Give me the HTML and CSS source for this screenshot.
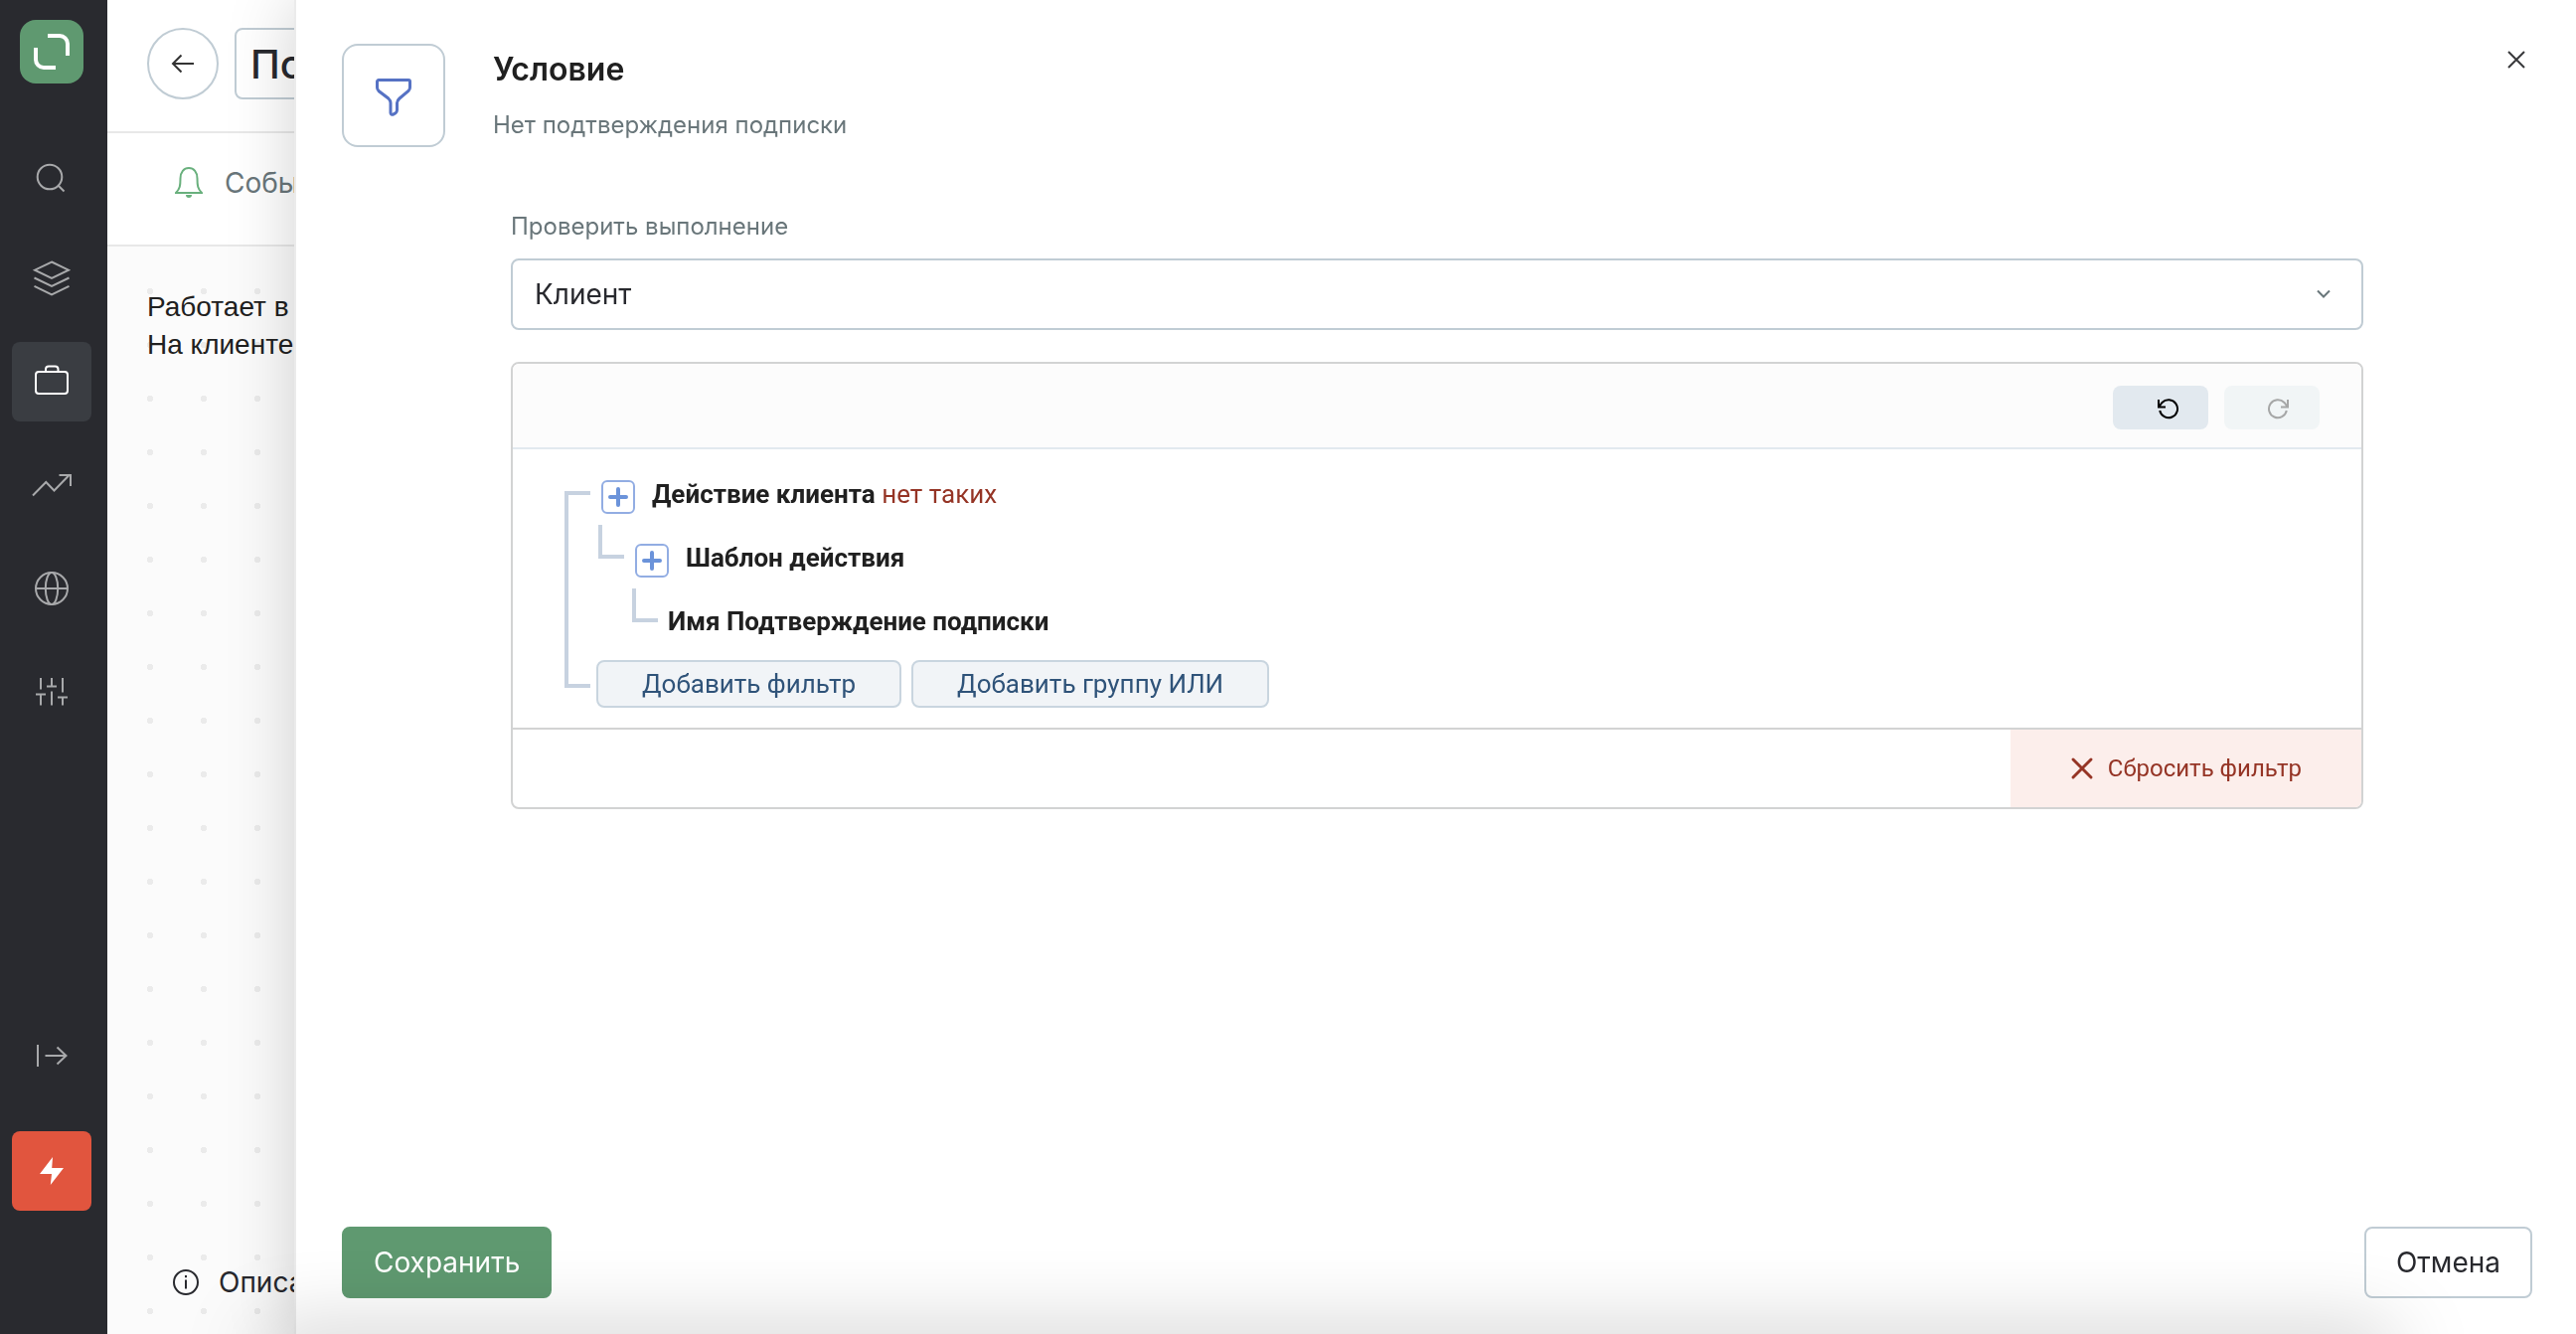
FILE: index.html
```html
<!DOCTYPE html>
<html lang="ru">
<head>
<meta charset="utf-8">
<meta name="viewport" content="width=device-width, initial-scale=1">
<title>Условие</title>
<link rel="stylesheet" href="styles.css">
</head>
<body>
<div class="app">
  <nav class="sidebar" aria-label="Главное меню">
    <a class="logo" href="#" aria-label="Главная">
      <svg width="64" height="64" viewBox="0 0 64 64" fill="none" stroke="#fff" stroke-width="4"><path d="M28 16h12a8 8 0 0 1 8 8v12M16 28v12a8 8 0 0 0 8 8h12"/></svg>
    </a>
    <a class="nav-item" href="#" aria-label="Поиск">
      <svg width="80" height="80" viewBox="0 0 80 80"><circle cx="38" cy="42" r="12.3"/><path d="M46.500 50.500l6 6"/></svg>
    </a>
    <a class="nav-item" href="#" aria-label="Слои">
      <svg width="80" height="80" viewBox="0 0 80 80"><path d="M40 23.500l17 8.200-17 8.300-17-8.300zM22.500 39.500l17.500 8.500 17.500-8.500M22.500 47.800l17.500 8.500 17.500-8.500"/></svg>
    </a>
    <a class="nav-item nav-item--active" href="#" aria-label="Кампании">
      <svg width="80" height="80" viewBox="0 0 80 80"><rect x="24" y="30" width="32" height="22" rx="3"/><path d="M34 30v-2.500a3 3 0 0 1 3-3h6.500a3 3 0 0 1 3 3V30"/></svg>
    </a>
    <a class="nav-item" href="#" aria-label="Отчёты">
      <svg width="80" height="80" viewBox="0 0 80 80"><path d="M21 50.500l13.300-13.500 8.200 8.500 15.500-16M47.500 30H59v11"/></svg>
    </a>
    <a class="nav-item" href="#" aria-label="Интеграции">
      <svg width="80" height="80" viewBox="0 0 80 80"><circle cx="40" cy="40" r="16"/><ellipse cx="40" cy="40" rx="6.200" ry="16"/><path d="M24 40h32"/></svg>
    </a>
    <a class="nav-item" href="#" aria-label="Настройки">
      <svg width="80" height="80" viewBox="0 0 80 80"><path d="M29 26v11.500M24 42.500h10M29 42.500V53.500M40 26v8M35 34.500h10M40 39.500v14M51 26v14.500M46 45.500h10M51 45.500v8"/></svg>
    </a>
    <div class="sidebar-bottom">
      <button class="nav-item" type="button" aria-label="Развернуть меню">
        <svg width="80" height="80" viewBox="0 0 80 80"><path d="M26 29v22M33.500 40H54M45.500 31.500L54.500 40l-9 8.500"/></svg>
      </button>
      <button class="nav-item nav-item--alert" type="button" aria-label="Быстрые действия">
        <svg width="80" height="80" viewBox="0 0 80 80"><path d="M41 26L28 43h12l-1.200 11L52 37H40.200z"/></svg>
      </button>
    </div>
  </nav>

  <main class="workspace">
    <header class="topbar">
      <button class="back" type="button" aria-label="Назад">
        <svg width="72" height="72" viewBox="0 0 72 72"><path d="M47 36H26M34.500 27.500L26 36l8.500 8.500"/></svg>
      </button>
      <input class="flow-name" type="text" value="По" aria-label="Название">
    </header>
    <div class="event-bar">
      <svg width="28" height="32" viewBox="0 0 28 32"><path d="M1 26c4-4 4.500-7 4.500-14.500C5.500 5 9 1 14 1s8.500 4 8.500 10.500C22.500 19 23 22 27 26z"/><path class="clapper" d="M11 28h6a3 3 0 0 1-6 0z"/></svg>
      <span>События</span>
    </div>
    <div class="canvas">
      <p class="note">Работает в<br>На клиенте</p>
      <div class="description">
        <svg width="26" height="26" viewBox="0 0 26 26"><circle cx="13" cy="13" r="12"/><path d="M13 10.500v9M13 6v2.200"/></svg>
        <span>Описание</span>
      </div>
    </div>
  </main>
</div>

<section class="drawer" role="dialog" aria-labelledby="drawer-title">
  <header class="drawer-header">
    <div class="drawer-icon">
      <svg width="36" height="38" viewBox="0 0 36 38"><path d="M3 1.500h30a1.500 1.500 0 0 1 1.500 1.500v6c0 1.500-.5 2.500-1.500 3.500l-9 7.500c-1.500 1.300-2.500 2.500-2.500 4.500v7c0 1.500-.5 2.500-1.500 3.200l-2 1.200c-1.500.9-3 .1-3-1.500V24.500c0-2-.8-3.200-2.200-4.500L3 12.500C2 11.500 1.500 10.500 1.500 9V3A1.500 1.500 0 0 1 3 1.500z"/></svg>
    </div>
    <div class="drawer-heading">
      <h1 id="drawer-title">Условие</h1>
      <p>Нет подтверждения подписки</p>
    </div>
    <button class="close" type="button" aria-label="Закрыть">
      <svg width="32" height="32" viewBox="0 0 32 32"><path d="M8 8l16 16M24 8L8 24"/></svg>
    </button>
  </header>

  <form class="drawer-body" id="condition-form">
    <label class="field-label" for="target">Проверить выполнение</label>
    <div class="select">
      <select id="target"><option>Клиент</option></select>
      <svg width="16" height="10" viewBox="0 0 16 10"><path d="M2 1.500l6 6 6-6"/></svg>
    </div>

    <div class="filter">
      <div class="filter-toolbar">
        <button class="history" type="button" aria-label="Отменить">
          <svg width="24" height="24" viewBox="0 0 24 24"><path d="M3 4v7.500h7M3.500 11L6.500 7A9 9 0 1 1 4.200 15"/></svg>
        </button>
        <button class="history history--off" type="button" aria-label="Повторить" disabled>
          <svg width="24" height="24" viewBox="0 0 24 24"><path d="M21 4v7.500h-7M20.500 11L17.500 7A9 9 0 1 0 19.800 15"/></svg>
        </button>
      </div>
      <div class="tree">
        <span class="bracket"></span>
        <div class="tree-rows">
          <div class="row row--root">
            <button class="plus" type="button" aria-label="Добавить условие"><svg width="20" height="20" viewBox="0 0 20 20"><path d="M10 2v16M2 10h16"/></svg></button>
            <span class="row-text"><b>Действие клиента</b> <span class="negative">нет таких</span></span>
          </div>
          <div class="row row--child">
            <span class="elbow"></span>
            <button class="plus" type="button" aria-label="Добавить условие"><svg width="20" height="20" viewBox="0 0 20 20"><path d="M10 2v16M2 10h16"/></svg></button>
            <b class="row-text">Шаблон действия</b>
          </div>
          <div class="row row--leaf">
            <span class="elbow"></span>
            <b class="row-text">Имя Подтверждение подписки</b>
          </div>
          <div class="tree-actions">
            <button class="add" type="button">Добавить фильтр</button>
            <button class="add" type="button">Добавить группу ИЛИ</button>
          </div>
        </div>
      </div>
      <div class="filter-footer">
        <button class="reset" type="button">
          <svg width="24" height="24" viewBox="0 0 24 24"><path d="M3 3l18 18M21 3L3 21"/></svg>
          Сбросить фильтр
        </button>
      </div>
    </div>
  </form>

  <footer class="drawer-footer">
    <button class="btn btn--primary" type="submit" form="condition-form">Сохранить</button>
    <button class="btn" type="button">Отмена</button>
  </footer>
</section>
<div class="bottom-shade"></div>
</body>
</html>
```
FILE: styles.css
```css
* { box-sizing: border-box; }

:root {
  --line: #c0ccd4;
  --muted: #69767a;
  --ink: #28292e;
  --text: #202020;
  --filter-font: Roboto, "Noto Sans", sans-serif;
}

body {
  margin: 0;
  background: #fff;
  color: var(--ink);
  font: 28px/40px Inter, sans-serif;
}

button, input, select { font: inherit; color: inherit; }
button { padding: 0; border: 0; background: none; cursor: pointer; }
svg { display: block; fill: none; flex: none; }
h1, p { margin: 0; }

.app { display: flex; min-height: 100vh; }

/* Sidebar */
.sidebar {
  display: flex;
  flex-direction: column;
  align-items: center;
  gap: 24px;
  width: 108px;
  flex: none;
  padding: 20px 4px 124px 0;
  background: #292a2f;
}
.logo { margin-bottom: 28px; border-radius: 16px; background: #5f9970; }
.nav-item { border-radius: 8px; stroke: #a8a9ab; stroke-width: 2; }
.nav-item--active { background: #3a3d42; stroke: #fff; }
.nav-item--alert { background: #e1553e; stroke: none; }
.nav-item--alert svg { fill: #fff; }
.sidebar-bottom { display: flex; flex-direction: column; gap: 36px; margin-top: auto; }

/* Page behind the drawer */
.workspace { display: flex; flex-direction: column; flex: 1; min-width: 0; }
.topbar {
  display: flex;
  gap: 16px;
  padding: 28px 40px 32px;
  border-bottom: 2px solid #e8e8e8;
}
.back { width: 72px; height: 72px; border: 2px solid var(--line); border-radius: 50%; }
.back svg { margin: -2px; stroke: #333; stroke-width: 2; }
.flow-name {
  flex: 1;
  min-width: 0;
  height: 72px;
  padding: 0 14px;
  border: 2px solid var(--line);
  border-radius: 8px;
  background: transparent;
  font-size: 40px;
  font-weight: 500;
}
.event-bar {
  display: flex;
  align-items: center;
  gap: 22px;
  padding: 30px 68px 42px;
  border-bottom: 2px solid #e8e8e8;
  color: var(--muted);
}
.event-bar svg { stroke: #69b07d; stroke-width: 2; }
.event-bar .clapper { fill: #69b07d; stroke: none; }
.canvas {
  display: flex;
  flex: 1;
  flex-direction: column;
  justify-content: space-between;
  padding: 42px 40px 32px;
  background: #fbfbfb radial-gradient(circle, #ebebeb 3px, transparent 3px) 16px 18px / 54px 54px;
}
.note { font: 28px/38px "Liberation Sans", sans-serif; color: var(--text); }
.description { display: flex; align-items: center; gap: 20px; padding-left: 26px; }
.description svg { stroke: var(--ink); stroke-width: 2; }

/* Drawer */
.drawer {
  position: fixed;
  inset: 0 0 0 296px;
  display: flex;
  flex-direction: column;
  padding: 44px 44px 36px 46px;
  border-left: 2px solid #ebebeb;
  background: #fff;
  box-shadow: 0 0 64px rgba(0, 0, 0, 0.18);
}
.drawer-header { display: flex; align-items: flex-start; gap: 48px; }
.drawer-icon {
  display: grid;
  place-items: center;
  width: 104px;
  height: 104px;
  padding-top: 4px;
  border: 2px solid var(--line);
  border-radius: 16px;
}
.drawer-icon svg { stroke: #5672c4; stroke-width: 3; }
.drawer-heading { display: grid; gap: 20px; flex: 1; padding-top: 6px; }
.drawer-heading h1 { color: var(--text); font-size: 32px; font-weight: 600; line-height: 40px; }
.drawer-heading p, .field-label { color: var(--muted); font-size: 24px; line-height: 32px; }
.drawer-heading p { margin-bottom: -2px; }
.close svg { stroke: #38393b; stroke-width: 2; }

.drawer-body { display: flex; flex-direction: column; flex: 1; padding: 64px 170px 0; }
.field-label { margin-bottom: 16px; }
.select { display: grid; align-items: center; }
.select > * { grid-area: 1 / 1; }
.select select {
  appearance: none;
  height: 72px;
  padding: 0 22px;
  border: 2px solid var(--line);
  border-radius: 8px;
  background: #fff;
}
.select svg { justify-self: end; margin-right: 32px; stroke: var(--muted); stroke-width: 2; pointer-events: none; }

/* Filter editor */
.filter {
  margin-top: 32px;
  overflow: hidden;
  border: 2px solid #d2d3d3;
  border-radius: 8px;
  color: var(--text);
  font: 26px/32px var(--filter-font);
}
.filter-toolbar {
  display: flex;
  justify-content: flex-end;
  gap: 16px;
  padding: 22px 42px 18px;
  border-bottom: 2px solid #e2e9ef;
  background: #fcfcfc;
}
.history {
  display: flex;
  align-items: center;
  justify-content: flex-end;
  width: 96px;
  height: 44px;
  padding-right: 29px;
  border-radius: 8px;
  background: #e2e9ef;
  stroke: #000;
  stroke-width: 2;
}
.history--off { background: #f1f5f6; stroke: #a6a7a7; }

.tree { display: flex; gap: 6px; padding: 16px 52px 20px; }
.bracket {
  width: 26px;
  margin: 26px 0 20px;
  border: 4px solid #c7d2e0;
  border-right: 0;
}
.row { display: flex; align-items: center; height: 64px; }
.row-text { padding-bottom: 6px; }
.row--root { gap: 17px; padding-left: 5px; }
.row--child { gap: 17px; padding-left: 2px; }
.row--leaf { gap: 10px; padding-left: 36px; }
.elbow {
  align-self: flex-start;
  width: 26px;
  height: 34px;
  margin-top: -4px;
  border: solid #c7d2e0;
  border-width: 0 0 4px 4px;
}
.row--child .elbow { margin-right: -6px; }
.plus {
  display: grid;
  place-items: center;
  width: 34px;
  height: 34px;
  border: 2px solid #92ade3;
  border-radius: 6px;
}
.plus svg { stroke: #6b93da; stroke-width: 4; stroke-linecap: round; }
.negative { color: #953425; }
.tree-actions { display: flex; gap: 10px; margin-top: 4px; }
.add {
  height: 48px;
  padding: 0 44px;
  border: 2px solid #c9d5df;
  border-radius: 8px;
  background: #f1f4f7;
  color: #2f5379;
}
.filter-footer { display: flex; justify-content: flex-end; border-top: 2px solid #d2d3d3; }
.reset {
  display: flex;
  align-items: center;
  gap: 14px;
  height: 78px;
  padding: 0 60px;
  background: #fceeeb;
  color: #953425;
  font-size: 24px;
}
.reset svg { stroke: #953425; stroke-width: 3; stroke-linecap: round; }

/* Actions */
.drawer-footer { display: flex; justify-content: space-between; }
.btn { height: 72px; padding: 0 30px; border: 2px solid var(--line); border-radius: 8px; background: #fff; }
.btn--primary { border-color: #5f9970; background: #5f9970; color: #fff; }

.bottom-shade {
  position: fixed;
  right: 180px;
  bottom: -40px;
  left: 260px;
  height: 40px;
  border-radius: 20px;
  box-shadow: 0 0 80px rgba(0, 0, 0, 0.26);
  pointer-events: none;
}
```
